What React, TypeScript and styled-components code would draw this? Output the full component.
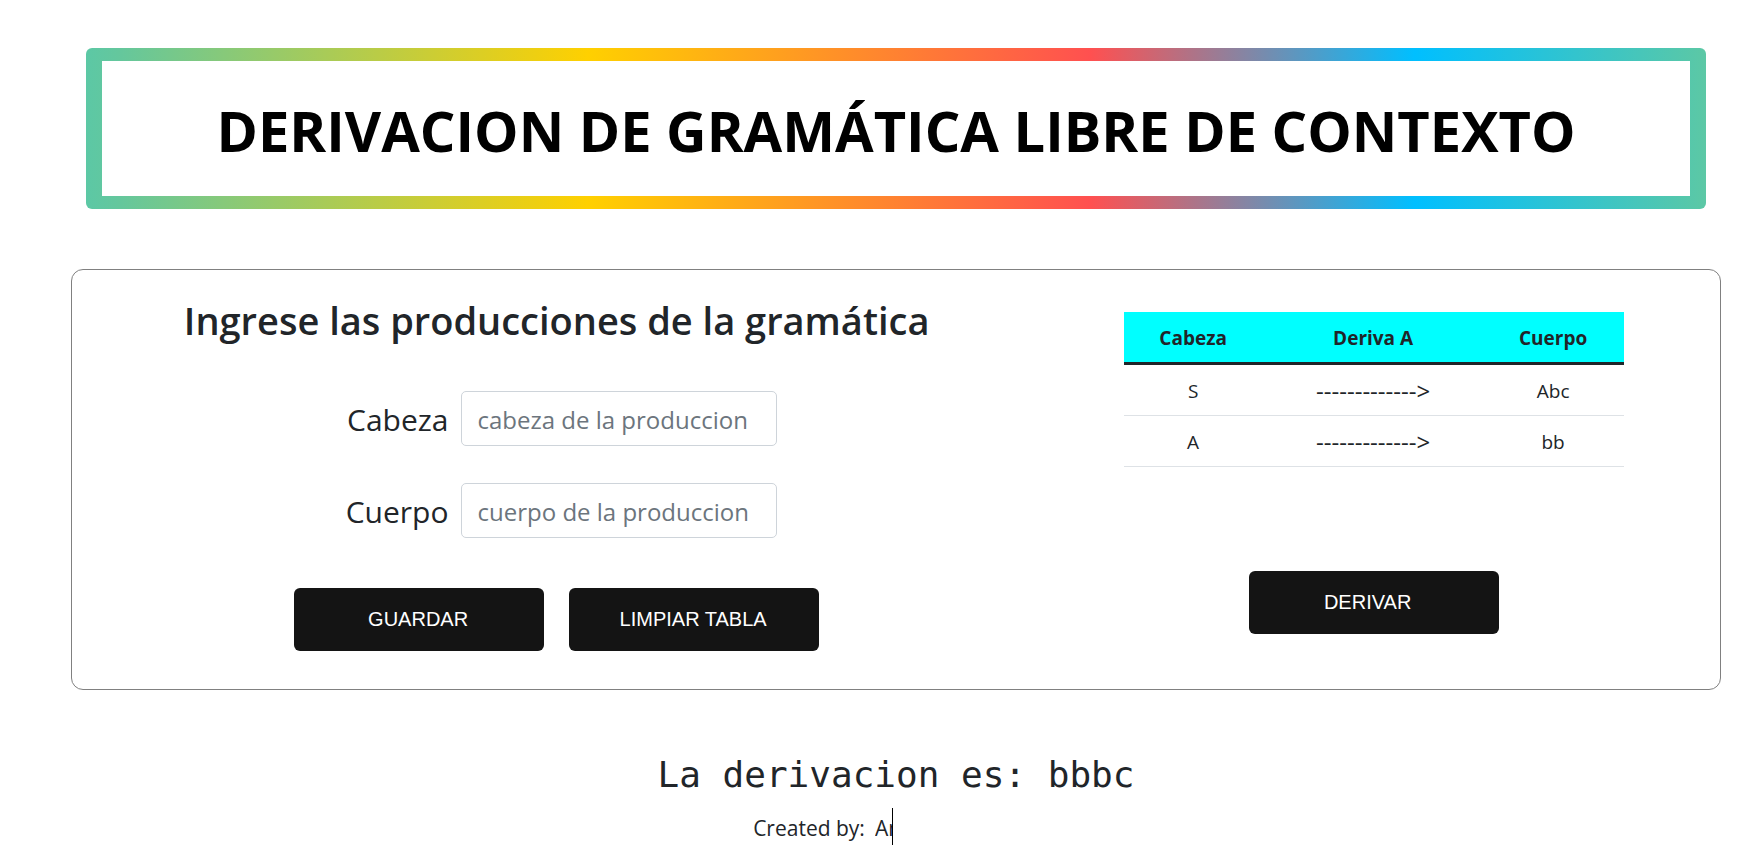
import React from "react";
import styled, { createGlobalStyle } from "styled-components";

const GlobalStyle = createGlobalStyle`
  *, *::before, *::after { box-sizing: border-box; }
  body {
    margin: 0;
    background: #fff;
    color: #212529;
    font-family: "Segoe UI", "Open Sans", "Noto Sans", sans-serif;
    font-size: 20px;
  }
`;

const Page = styled.main`
  display: flex;
  flex-direction: column;
  padding: 48px 39px 8px 71px;
`;

const Banner = styled.header`
  margin: 0 15px;
  padding: 13px 16px;
  border-radius: 6px;
  background: linear-gradient(
    90deg,
    #5cc8a5 0%,
    #64c79d 2%,
    #ffd000 31%,
    #ff5050 62%,
    #00bfff 82%,
    #5cc8a5 100%
  );
`;

const Title = styled.h1`
  margin: 0;
  padding: 29px 0 26px;
  background: #fff;
  color: #000;
  font-size: 56px;
  font-weight: 700;
  line-height: 80px;
  text-align: center;
  white-space: nowrap;
`;

const Panel = styled.section`
  display: grid;
  grid-template-columns: 15fr 11fr;
  margin-top: 60px;
  padding: 24px 0 38px 13px;
  border: 1px solid #808080;
  border-radius: 12px;
`;

const Column = styled.div<{ $top?: number }>`
  display: flex;
  flex-direction: column;
  align-items: center;
  padding-top: ${(p) => p.$top ?? 0}px;
`;

const Heading = styled.h2`
  margin: 0;
  font-size: 38px;
  font-weight: 600;
  line-height: 52px;
  white-space: nowrap;
`;

const Fields = styled.form`
  display: flex;
  flex-direction: column;
  gap: 37px;
  margin: 45px 0 50px;
  padding-left: 9px;
`;

const Field = styled.div`
  display: flex;
  align-items: center;
  justify-content: flex-end;
  gap: 12px;
`;

const Label = styled.label`
  padding-top: 2px;
  font-size: 30px;
  line-height: 40px;
`;

const TextInput = styled.input`
  width: 316px;
  height: 55px;
  padding: 2px 16px 0;
  border: 1px solid #ced4da;
  border-radius: 5px;
  color: #212529;
  font-family: inherit;
  font-size: 24px;
  &::placeholder { color: #6c757d; opacity: 1; }
`;

const Actions = styled.div`
  display: flex;
  gap: 25px;
`;

const Button = styled.button<{ $inset?: number }>`
  width: 250px;
  height: 63px;
  padding: 0 ${(p) => p.$inset ?? 2}px 0 0;
  border: 0;
  border-radius: 6px;
  background: #141414;
  color: #fff;
  font-family: "Liberation Sans", Arial, sans-serif;
  font-size: 20px;
  text-transform: uppercase;
`;

const Table = styled.table`
  width: 500px;
  margin-bottom: 104px;
  border-spacing: 0;
  table-layout: fixed;
  text-align: center;
  line-height: 30px;
  font-size: 19px;

  th {
    height: 53px;
    padding: 2px 2px 0 0;
    background: aqua;
    border-bottom: 3px solid #212529;
  }
  td {
    height: 51px;
    padding: 1px 2px 0 0;
    border-bottom: 1px solid #dee2e6;
  }
`;

const NarrowCol = styled.col`
  width: 28%;
`;

const ArrowCell = styled.td`
  font-size: 24px;
`;

const Result = styled.output`
  margin-top: 61px;
  font-family: Consolas, "DejaVu Sans Mono", monospace;
  font-size: 36px;
  line-height: 48px;
  text-align: center;
`;

const Credit = styled.footer`
  display: flex;
  justify-content: center;
  align-items: flex-start;
  gap: 10px;
  margin-top: 9px;
  font-size: 21px;
  line-height: 37px;
`;

const CreditLabel = styled.span`
  padding-top: 2px;
`;

const Typed = styled.span`
  width: 164px;
`;

const TypedText = styled.span`
  display: block;
  width: 18px;
  height: 37px;
  padding-top: 2px;
  overflow: hidden;
  border-right: 1px solid #000;
  white-space: nowrap;
`;

const productions = [
  { head: "S", body: "Abc" },
  { head: "A", body: "bb" },
];

export default function App() {
  return (
    <>
      <GlobalStyle />
      <Page>
        <Banner>
          <Title>DERIVACION DE GRAMÁTICA LIBRE DE CONTEXTO</Title>
        </Banner>
        <Panel>
          <Column>
            <Heading>Ingrese las producciones de la gramática</Heading>
            <Fields id="production" onSubmit={(e) => e.preventDefault()}>
              <Field>
                <Label htmlFor="head">Cabeza</Label>
                <TextInput id="head" placeholder="cabeza de la produccion" />
              </Field>
              <Field>
                <Label htmlFor="body">Cuerpo</Label>
                <TextInput id="body" placeholder="cuerpo de la produccion" />
              </Field>
            </Fields>
            <Actions>
              <Button type="submit" form="production">Guardar</Button>
              <Button type="button">Limpiar tabla</Button>
            </Actions>
          </Column>
          <Column $top={18}>
            <Table>
              <colgroup>
                <NarrowCol />
                <col />
                <NarrowCol />
              </colgroup>
              <thead>
                <tr>
                  <th scope="col">Cabeza</th>
                  <th scope="col">Deriva A</th>
                  <th scope="col">Cuerpo</th>
                </tr>
              </thead>
              <tbody>
                {productions.map((p) => (
                  <tr key={p.head}>
                    <td>{p.head}</td>
                    <ArrowCell>-------------&gt;</ArrowCell>
                    <td>{p.body}</td>
                  </tr>
                ))}
              </tbody>
            </Table>
            <Button type="button" $inset={13}>Derivar</Button>
          </Column>
        </Panel>
        <Result>La derivacion es: bbbc</Result>
        <Credit>
          <CreditLabel>Created by:</CreditLabel>
          <Typed>
            <TypedText>An</TypedText>
          </Typed>
        </Credit>
      </Page>
    </>
  );
}
